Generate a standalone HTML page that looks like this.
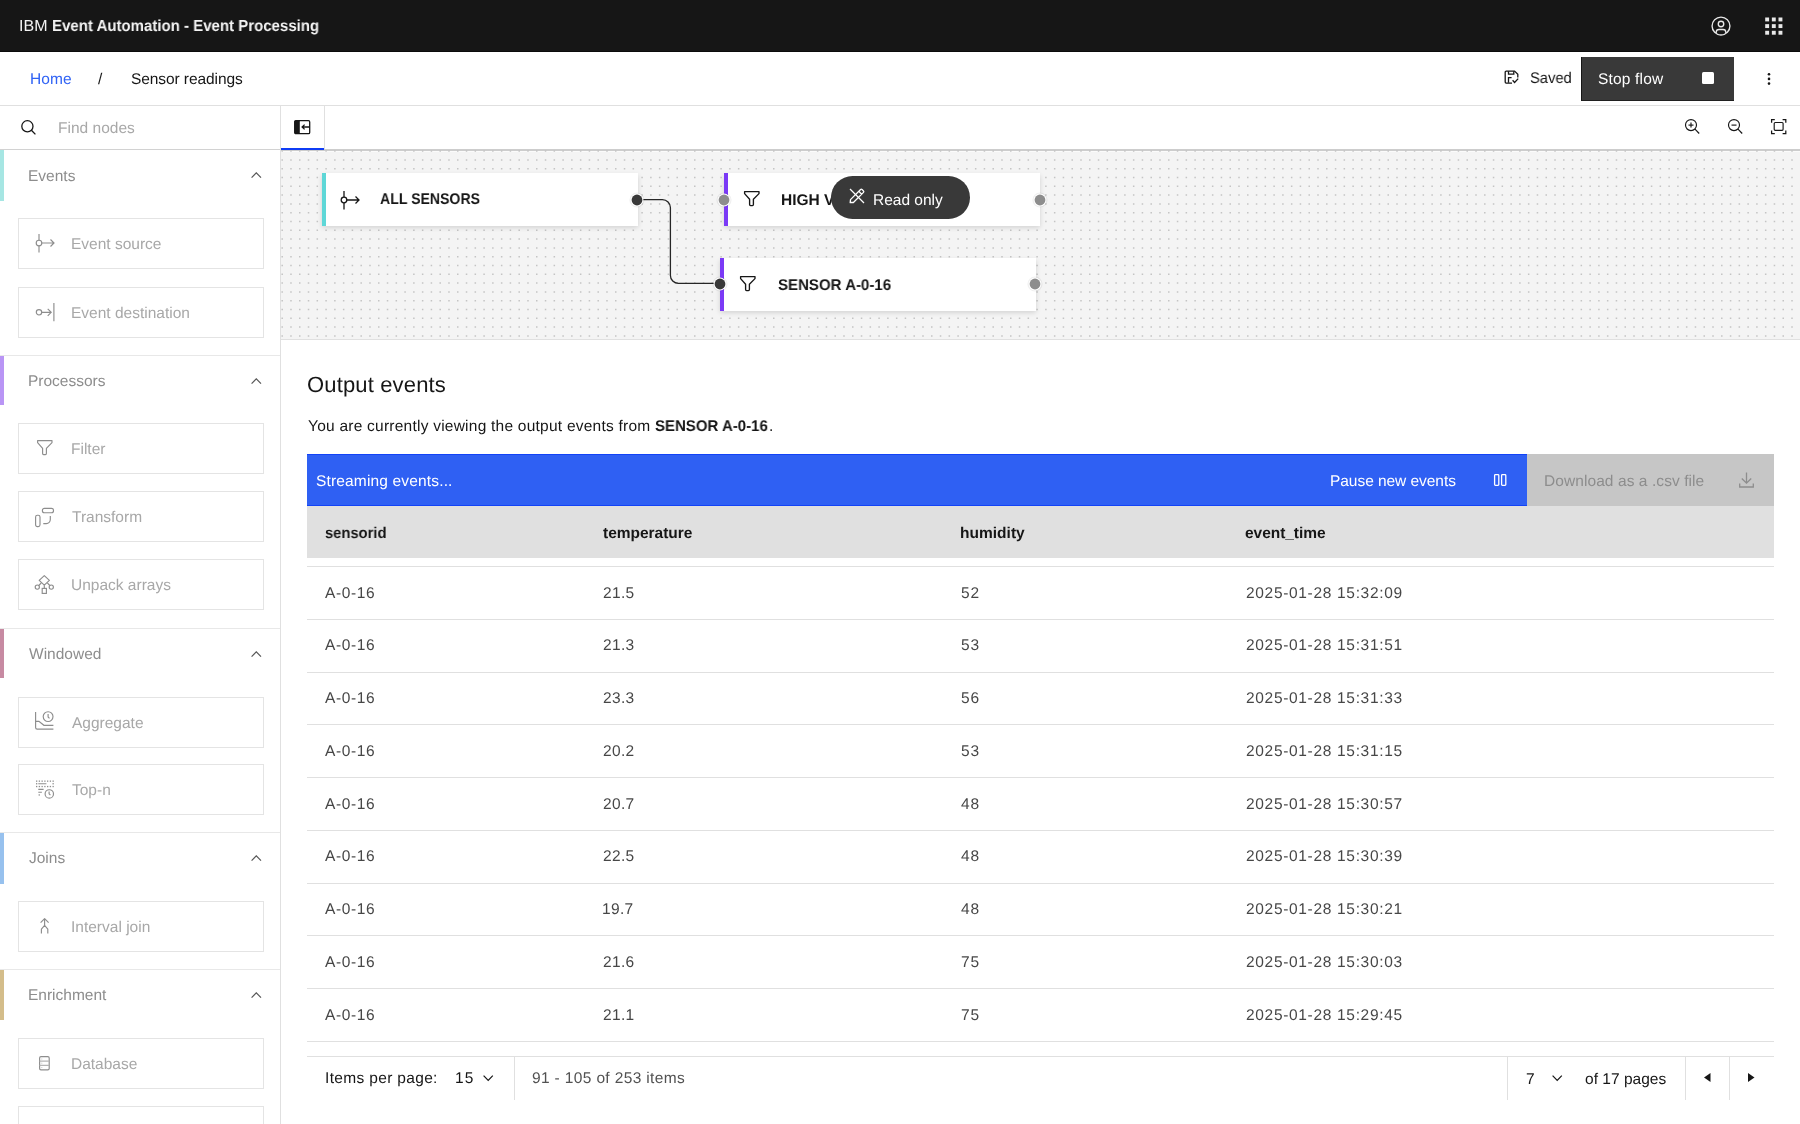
<!DOCTYPE html>
<html><head><meta charset="utf-8"><title>Event Processing</title>
<style>
html,body{margin:0;padding:0;}
body{width:1800px;height:1124px;overflow:hidden;position:relative;background:#fff;font-family:"Liberation Sans",sans-serif;}
.t{position:absolute;white-space:nowrap;text-rendering:geometricPrecision;will-change:transform;}
svg{display:block;}
</style></head><body>
<div style="position:absolute;left:0px;top:0px;width:1800px;height:52px;background:#161616;"></div>
<div style="position:absolute;left:0px;top:51px;width:1800px;height:1px;background:#0b0b0b;"></div>
<div class="t" id="t1" style="left:19.20px;top:17.35px;font-size:16px;line-height:20px;color:#f4f4f4;letter-spacing:0.091px;">IBM</div>
<div class="t" id="t2" style="left:52.06px;top:17.35px;font-size:16px;line-height:20px;color:#f4f4f4;transform:scaleX(0.9379);transform-origin:0 0;font-weight:700;">Event Automation - Event Processing</div>
<svg style="position:absolute;left:1710px;top:14.9px;" width="22" height="22" viewBox="0 0 32 32"><path fill="#e8e8e8" d="M16,8a5,5,0,1,0,5,5A5,5,0,0,0,16,8Zm0,8a3,3,0,1,1,3-3A3.0034,3.0034,0,0,1,16,16Z"/><path fill="#e8e8e8" d="M16,2A14,14,0,1,0,30,16,14.0158,14.0158,0,0,0,16,2ZM10,26.3765V25a3.0033,3.0033,0,0,1,3-3h6a3.0033,3.0033,0,0,1,3,3v1.3765a11.8989,11.8989,0,0,1-12,0ZM23.9925,24.9258A5.0016,5.0016,0,0,0,19,20H13a5.0016,5.0016,0,0,0-4.9925,4.9258,12,12,0,1,1,15.985,0Z"/></svg>
<svg style="position:absolute;left:1765px;top:17.2px;overflow:visible;" width="18" height="18" viewBox="0 0 18 18" fill="none"><rect x="0.20" y="0.50" width="3.9" height="3.9" fill="#e8e8e8"/><rect x="6.85" y="0.50" width="3.9" height="3.9" fill="#e8e8e8"/><rect x="13.50" y="0.50" width="3.9" height="3.9" fill="#e8e8e8"/><rect x="0.20" y="7.15" width="3.9" height="3.9" fill="#e8e8e8"/><rect x="6.85" y="7.15" width="3.9" height="3.9" fill="#e8e8e8"/><rect x="13.50" y="7.15" width="3.9" height="3.9" fill="#e8e8e8"/><rect x="0.20" y="13.80" width="3.9" height="3.9" fill="#e8e8e8"/><rect x="6.85" y="13.80" width="3.9" height="3.9" fill="#e8e8e8"/><rect x="13.50" y="13.80" width="3.9" height="3.9" fill="#e8e8e8"/></svg>
<div style="position:absolute;left:0px;top:52px;width:1800px;height:53px;background:#ffffff;"></div>
<div style="position:absolute;left:0px;top:105px;width:1800px;height:1px;background:#e0e0e0;"></div>
<div class="t" id="t3" style="left:30.30px;top:69.83px;font-size:15.5px;line-height:20px;color:#2f62f5;letter-spacing:0.091px;">Home</div>
<div class="t" id="t4" style="left:98.00px;top:69.83px;font-size:15.5px;line-height:20px;color:#161616;">/</div>
<div class="t" id="t5" style="left:131.30px;top:69.83px;font-size:15.5px;line-height:20px;color:#161616;letter-spacing:-0.080px;">Sensor readings</div>
<svg style="position:absolute;left:1504px;top:70px;overflow:visible;" width="16" height="16" viewBox="0 0 16 16" fill="none"><path d="M8 13.1 H2.2 a1 1 0 0 1 -1 -1 V2.1 a1 1 0 0 1 1 -1 H10.6 L13.8 4.3 V7.5" stroke="#161616" stroke-width="1.3" stroke-linejoin="round"/><path d="M4.5 1.2 V4.1 H9.8 V1.2" stroke="#161616" stroke-width="1.3"/><path d="M4.5 12.8 V7.6 H7.6" stroke="#161616" stroke-width="1.3"/><path d="M8.6 10.2 L10.6 12.5 L14.2 8.6" stroke="#161616" stroke-width="1.3"/></svg>
<div class="t" id="t6" style="left:1529.70px;top:69.03px;font-size:15.5px;line-height:20px;color:#161616;transform:scaleX(0.9509);transform-origin:0 0;">Saved</div>
<div style="position:absolute;left:1580.5px;top:57px;width:153.5px;height:43.8px;background:#393939;box-sizing:border-box;border-left:1px solid #161616;border-bottom:1px solid #202020;"></div>
<div class="t" id="t7" style="left:1598.00px;top:69.73px;font-size:15.5px;line-height:20px;color:#ffffff;letter-spacing:0.180px;">Stop flow</div>
<div style="position:absolute;left:1702px;top:72px;width:11.5px;height:11.5px;background:#ffffff;border-radius:1.5px;"></div>
<svg style="position:absolute;left:1767px;top:72px;overflow:visible;" width="4" height="14" viewBox="0 0 4 14" fill="none"><circle cx="2" cy="2.2" r="1.3" fill="#161616"/><circle cx="2" cy="6.9" r="1.3" fill="#161616"/><circle cx="2" cy="11.6" r="1.3" fill="#161616"/></svg>
<div style="position:absolute;left:0px;top:106px;width:1800px;height:44px;background:#ffffff;"></div>
<div style="position:absolute;left:0px;top:149px;width:1800px;height:1px;background:#d2d2d2;"></div>
<svg style="position:absolute;left:20px;top:119px;overflow:visible;" width="18" height="18" viewBox="0 0 18 18" fill="none"><circle cx="7.4" cy="7.3" r="5.6" stroke="#161616" stroke-width="1.3"/><path d="M11.4 11.3 L15.4 15.4" stroke="#161616" stroke-width="1.3"/></svg>
<div class="t" id="t8" style="left:57.90px;top:119.03px;font-size:15.5px;line-height:20px;color:#a8a8a8;letter-spacing:0.018px;">Find nodes</div>
<div style="position:absolute;left:280px;top:106px;width:1px;height:44px;background:#e0e0e0;"></div>
<div style="position:absolute;left:324px;top:106px;width:1px;height:44px;background:#e0e0e0;"></div>
<svg style="position:absolute;left:294.2px;top:119.8px;overflow:visible;" width="17" height="15" viewBox="0 0 17 15" fill="none"><rect x="0.7" y="0.7" width="15" height="13" rx="1.2" stroke="#161616" stroke-width="1.3" fill="#fff"/><rect x="0.6" y="0.6" width="5.2" height="13.2" rx="0.8" fill="#161616"/><path d="M15.5 7.0 H8.4 M10.6 4.6 L8.1 7.0 L10.6 9.4" stroke="#161616" stroke-width="1.3"/></svg>
<div style="position:absolute;left:281px;top:148px;width:43px;height:2px;background:#0f3cf5;"></div>
<svg style="position:absolute;left:1684.8px;top:119px;overflow:visible;" width="16" height="16" viewBox="0 0 16 16" fill="none"><circle cx="6" cy="6.1" r="5.5" stroke="#161616" stroke-width="1.15"/><path d="M10 10.1 L14.2 14.5" stroke="#161616" stroke-width="1.15"/><path d="M3.5 6.1 H8.5" stroke="#161616" stroke-width="1.15"/><path d="M6 3.6 V8.6" stroke="#161616" stroke-width="1.15"/></svg>
<svg style="position:absolute;left:1727.8px;top:119px;overflow:visible;" width="16" height="16" viewBox="0 0 16 16" fill="none"><circle cx="6" cy="6.1" r="5.5" stroke="#161616" stroke-width="1.15"/><path d="M10 10.1 L14.2 14.5" stroke="#161616" stroke-width="1.15"/><path d="M3.5 6.1 H8.5" stroke="#161616" stroke-width="1.15"/></svg>
<svg style="position:absolute;left:1770.6px;top:119.2px;overflow:visible;" width="16" height="16" viewBox="0 0 16 16" fill="none"><path d="M0.6 3.8 V0.6 H3.8 M11.6 0.6 H14.8 V3.8 M14.8 11.4 V14.6 H11.6 M3.8 14.6 H0.6 V11.4" stroke="#161616" stroke-width="1.25"/><rect x="3.2" y="3.5" width="8.9" height="7.8" rx="1" stroke="#161616" stroke-width="1.15"/></svg>
<div style="position:absolute;left:0px;top:150px;width:280px;height:974px;background:#ffffff;"></div>
<div style="position:absolute;left:280px;top:150px;width:1px;height:974px;background:#e0e0e0;"></div>
<div style="position:absolute;left:0px;top:150px;width:4px;height:51px;background:#a6e6e3;"></div>
<div class="t" id="t9" style="left:27.50px;top:167.03px;font-size:15.5px;line-height:20px;color:#8d8d8d;">Events</div>
<svg style="position:absolute;left:250.5px;top:172.2px;overflow:visible;" width="11" height="6" viewBox="0 0 11 6" fill="none"><path d="M0.6 5.6 L5.3 0.9 L10 5.6" stroke="#555" stroke-width="1.2"/></svg>
<div style="position:absolute;left:18px;top:218px;width:246px;height:51px;background:#ffffff;box-sizing:border-box;border:1px solid #e4e4e4;"></div>
<div class="t" id="t10" style="left:70.80px;top:234.93px;font-size:15.5px;line-height:20px;color:#a8a8a8;">Event source</div>
<svg style="position:absolute;left:28.6px;top:233.29999999999998px;overflow:visible;" width="20" height="20" viewBox="0 0 20 20" fill="none"><path d="M10 1 V7.2 M10 12.8 V19.5" stroke="#8d8d8d" stroke-width="1.15"/><circle cx="10" cy="10" r="2.8" stroke="#8d8d8d" stroke-width="1.15"/><path d="M12.8 10 H25 M21.5 6.5 L25 10 L21.5 13.5" stroke="#8d8d8d" stroke-width="1.15"/></svg>
<div style="position:absolute;left:18px;top:287px;width:246px;height:51px;background:#ffffff;box-sizing:border-box;border:1px solid #e4e4e4;"></div>
<div class="t" id="t11" style="left:70.80px;top:303.93px;font-size:15.5px;line-height:20px;color:#a8a8a8;">Event destination</div>
<svg style="position:absolute;left:35.5px;top:303.09999999999997px;overflow:visible;" width="20" height="20" viewBox="0 0 20 20" fill="none"><circle cx="3" cy="9.3" r="2.7" stroke="#8d8d8d" stroke-width="1.15"/><path d="M5.7 9.3 H15.2 M11.7 5.8 L15.2 9.3 L11.7 12.8 M17.9 0 V18.3" stroke="#8d8d8d" stroke-width="1.15"/></svg>
<div style="position:absolute;left:0px;top:355px;width:280px;height:1px;background:#e8e8e8;"></div>
<div style="position:absolute;left:0px;top:356px;width:4px;height:49px;background:#b995f5;"></div>
<div class="t" id="t12" style="left:27.50px;top:372.23px;font-size:15.5px;line-height:20px;color:#8d8d8d;">Processors</div>
<svg style="position:absolute;left:250.5px;top:378.2px;overflow:visible;" width="11" height="6" viewBox="0 0 11 6" fill="none"><path d="M0.6 5.6 L5.3 0.9 L10 5.6" stroke="#555" stroke-width="1.2"/></svg>
<div style="position:absolute;left:18px;top:423px;width:246px;height:51px;background:#ffffff;box-sizing:border-box;border:1px solid #e4e4e4;"></div>
<div class="t" id="t13" style="left:70.80px;top:439.93px;font-size:15.5px;line-height:20px;color:#a8a8a8;">Filter</div>
<svg style="position:absolute;left:37px;top:440.2px;overflow:visible;" width="16" height="16" viewBox="0 0 16 16" fill="none"><path d="M0.6 0.6 H15 V2.6 L9.4 8.3 V13.6 a1 1 0 0 1 -1 1 H6.6 a1 1 0 0 1 -1 -1 V8.3 L0.6 2.6 Z" stroke="#8d8d8d" stroke-width="1.15" stroke-linejoin="round"/></svg>
<div style="position:absolute;left:18px;top:491px;width:246px;height:51px;background:#ffffff;box-sizing:border-box;border:1px solid #e4e4e4;"></div>
<div class="t" id="t14" style="left:71.80px;top:507.93px;font-size:15.5px;line-height:20px;color:#a8a8a8;">Transform</div>
<svg style="position:absolute;left:34.9px;top:507.6px;overflow:visible;" width="20" height="20" viewBox="0 0 20 20" fill="none"><rect x="7.4" y="0.4" width="11.1" height="4.3" rx="2" stroke="#8d8d8d" stroke-width="1.15"/><rect x="0.6" y="7.2" width="4.4" height="11.4" rx="1.8" stroke="#8d8d8d" stroke-width="1.15"/><path d="M15.3 8.1 V11.6 a4 4 0 0 1 -4 4 H8.3" stroke="#8d8d8d" stroke-width="1.15"/></svg>
<div style="position:absolute;left:18px;top:559px;width:246px;height:51px;background:#ffffff;box-sizing:border-box;border:1px solid #e4e4e4;"></div>
<div class="t" id="t15" style="left:70.80px;top:575.93px;font-size:15.5px;line-height:20px;color:#a8a8a8;">Unpack arrays</div>
<svg style="position:absolute;left:35.2px;top:574.6px;overflow:visible;" width="20" height="20" viewBox="0 0 20 20" fill="none"><path d="M9.3 0.6 L14.4 5.4 L9.3 10.2 L4.2 5.4 Z" stroke="#8d8d8d" stroke-width="1.15" stroke-linejoin="round"/><circle cx="2.3" cy="12.1" r="2.1" stroke="#8d8d8d" stroke-width="1.15"/><circle cx="16.3" cy="12.1" r="2.1" stroke="#8d8d8d" stroke-width="1.15"/><path d="M3.8 10.5 L6.3 7.8 M14.8 10.5 L12.3 7.8 M9.3 10.2 V13.4" stroke="#8d8d8d" stroke-width="1.15"/><rect x="7.2" y="13.4" width="4.2" height="5" stroke="#8d8d8d" stroke-width="1.15"/></svg>
<div style="position:absolute;left:0px;top:628px;width:280px;height:1px;background:#e8e8e8;"></div>
<div style="position:absolute;left:0px;top:629px;width:4px;height:49px;background:#c78aa2;"></div>
<div class="t" id="t16" style="left:28.50px;top:645.23px;font-size:15.5px;line-height:20px;color:#8d8d8d;">Windowed</div>
<svg style="position:absolute;left:250.5px;top:651.2px;overflow:visible;" width="11" height="6" viewBox="0 0 11 6" fill="none"><path d="M0.6 5.6 L5.3 0.9 L10 5.6" stroke="#555" stroke-width="1.2"/></svg>
<div style="position:absolute;left:18px;top:697px;width:246px;height:51px;background:#ffffff;box-sizing:border-box;border:1px solid #e4e4e4;"></div>
<div class="t" id="t17" style="left:71.80px;top:713.93px;font-size:15.5px;line-height:20px;color:#a8a8a8;">Aggregate</div>
<svg style="position:absolute;left:35.4px;top:712.3000000000001px;overflow:visible;" width="20" height="20" viewBox="0 0 20 20" fill="none"><path d="M0.6 0 V15.5 a1.6 1.6 0 0 0 1.6 1.6 H18.4" stroke="#8d8d8d" stroke-width="1.15"/><path d="M0.6 9.3 H3.9 L8.9 13.3 H18.4" stroke="#8d8d8d" stroke-width="1.15"/><circle cx="13.1" cy="4.6" r="4.9" stroke="#8d8d8d" stroke-width="1.15"/><path d="M13.1 2.1 V4.9 L14.5 6.3" stroke="#8d8d8d" stroke-width="1.15"/></svg>
<div style="position:absolute;left:18px;top:764px;width:246px;height:51px;background:#ffffff;box-sizing:border-box;border:1px solid #e4e4e4;"></div>
<div class="t" id="t18" style="left:71.80px;top:780.93px;font-size:15.5px;line-height:20px;color:#a8a8a8;">Top-n</div>
<svg style="position:absolute;left:36px;top:780.4000000000001px;overflow:visible;" width="20" height="20" viewBox="0 0 20 20" fill="none"><rect x="0.00" y="0.5" width="1.3" height="1.3" fill="#8d8d8d"/><rect x="2.75" y="0.5" width="1.3" height="1.3" fill="#8d8d8d"/><rect x="5.50" y="0.5" width="1.3" height="1.3" fill="#8d8d8d"/><rect x="8.25" y="0.5" width="1.3" height="1.3" fill="#8d8d8d"/><rect x="11.00" y="0.5" width="1.3" height="1.3" fill="#8d8d8d"/><rect x="13.75" y="0.5" width="1.3" height="1.3" fill="#8d8d8d"/><rect x="16.50" y="0.5" width="1.3" height="1.3" fill="#8d8d8d"/><rect x="0.00" y="5.9" width="1.3" height="1.3" fill="#8d8d8d"/><rect x="2.75" y="5.9" width="1.3" height="1.3" fill="#8d8d8d"/><rect x="5.50" y="5.9" width="1.3" height="1.3" fill="#8d8d8d"/><rect x="8.25" y="5.9" width="1.3" height="1.3" fill="#8d8d8d"/><rect x="11.00" y="5.9" width="1.3" height="1.3" fill="#8d8d8d"/><rect x="13.75" y="5.9" width="1.3" height="1.3" fill="#8d8d8d"/><rect x="16.50" y="5.9" width="1.3" height="1.3" fill="#8d8d8d"/><rect x="0" y="3.1" width="1.3" height="1.3" fill="#8d8d8d"/><rect x="16.5" y="3.1" width="1.3" height="1.3" fill="#8d8d8d"/><path d="M2.3 3.75 H10.4 M2.3 9.4 H7.6 M2.3 12.3 H5.9" stroke="#8d8d8d" stroke-width="1.1"/><rect x="2.6" y="14.3" width="1.3" height="1.3" fill="#8d8d8d"/><circle cx="13.3" cy="13.9" r="4.2" stroke="#8d8d8d" stroke-width="1.15"/><path d="M13.1 11.5 V13.8 L14.4 15.2" stroke="#8d8d8d" stroke-width="1.15"/></svg>
<div style="position:absolute;left:0px;top:832px;width:280px;height:1px;background:#e8e8e8;"></div>
<div style="position:absolute;left:0px;top:833px;width:4px;height:51px;background:#97c1ee;"></div>
<div class="t" id="t19" style="left:28.50px;top:849.23px;font-size:15.5px;line-height:20px;color:#8d8d8d;">Joins</div>
<svg style="position:absolute;left:250.5px;top:855.2px;overflow:visible;" width="11" height="6" viewBox="0 0 11 6" fill="none"><path d="M0.6 5.6 L5.3 0.9 L10 5.6" stroke="#555" stroke-width="1.2"/></svg>
<div style="position:absolute;left:18px;top:901px;width:246px;height:51px;background:#ffffff;box-sizing:border-box;border:1px solid #e4e4e4;"></div>
<div class="t" id="t20" style="left:70.80px;top:917.93px;font-size:15.5px;line-height:20px;color:#a8a8a8;">Interval join</div>
<svg style="position:absolute;left:39.9px;top:918.1px;overflow:visible;" width="12" height="18" viewBox="0 0 12 18" fill="none"><path d="M0.6 4.6 L4.6 0.6 L8.6 4.6 M4.6 0.6 V7.4 L1.4 11.2 V15.5 M4.6 7.4 L7.8 11.2 V15.5" stroke="#8d8d8d" stroke-width="1.15" stroke-linejoin="round"/></svg>
<div style="position:absolute;left:0px;top:969px;width:280px;height:1px;background:#e8e8e8;"></div>
<div style="position:absolute;left:0px;top:970px;width:4px;height:50px;background:#d4bd8a;"></div>
<div class="t" id="t21" style="left:27.50px;top:986.23px;font-size:15.5px;line-height:20px;color:#8d8d8d;">Enrichment</div>
<svg style="position:absolute;left:250.5px;top:992.2px;overflow:visible;" width="11" height="6" viewBox="0 0 11 6" fill="none"><path d="M0.6 5.6 L5.3 0.9 L10 5.6" stroke="#555" stroke-width="1.2"/></svg>
<div style="position:absolute;left:18px;top:1038px;width:246px;height:51px;background:#ffffff;box-sizing:border-box;border:1px solid #e4e4e4;"></div>
<div class="t" id="t22" style="left:70.80px;top:1054.93px;font-size:15.5px;line-height:20px;color:#a8a8a8;">Database</div>
<svg style="position:absolute;left:39px;top:1056.4px;overflow:visible;" width="12" height="15" viewBox="0 0 12 15" fill="none"><rect x="0.6" y="0.6" width="9.6" height="13.2" rx="1.4" stroke="#8d8d8d" stroke-width="1.15"/><path d="M0.6 5.1 H10.2 M0.6 9.3 H10.2" stroke="#b5b5b5" stroke-width="1.15"/><path d="M2 3 H3.4 M2 7.2 H3.4 M2 11.5 H3.4" stroke="#d0d0d0" stroke-width="0.8"/></svg>
<div style="position:absolute;left:18px;top:1106px;width:246px;height:51px;background:#ffffff;box-sizing:border-box;border:1px solid #e4e4e4;"></div>
<div style="position:absolute;left:281px;top:149px;width:1519px;height:2px;background:#cdcdcd;"></div>
<div style="position:absolute;left:281px;top:151px;width:1519px;height:1px;background:#fbfbfb;"></div>
<div style="position:absolute;left:281px;top:148px;width:43px;height:2px;background:#0f3cf5;"></div>
<div style="position:absolute;left:281px;top:152px;width:1519px;height:187px;background:#f4f4f4;"></div>
<svg style="position:absolute;left:281px;top:150px;" width="1519" height="189"><path d="M0.45 1.100H1519M0.45 9.900H1519M0.45 18.700H1519M0.45 27.500H1519M0.45 36.300H1519M0.45 45.100H1519M0.45 53.900H1519M0.45 62.700H1519M0.45 71.500H1519M0.45 80.300H1519M0.45 89.100H1519M0.45 97.900H1519M0.45 106.700H1519M0.45 115.500H1519M0.45 124.300H1519M0.45 133.100H1519M0.45 141.900H1519M0.45 150.700H1519M0.45 159.500H1519M0.45 168.300H1519M0.45 177.100H1519M0.45 185.900H1519" stroke="#c4c4c4" stroke-width="1.5" stroke-dasharray="1.5 7.278"/></svg>
<div style="position:absolute;left:281px;top:339px;width:1519px;height:1px;background:#e0e0e0;"></div>
<svg style="position:absolute;left:637px;top:199px;overflow:visible;" width="90" height="90" viewBox="0 0 90 90" fill="none"><path d="M0 0.6 H25.4 a8 8 0 0 1 8 8 V76.4 a8 8 0 0 0 8 8 H83" stroke="#262626" stroke-width="1.3"/></svg>
<div style="position:absolute;left:322px;top:173px;width:316px;height:53px;background:#ffffff;box-shadow:0 1.5px 5px rgba(0,0,0,0.15);"></div><div style="position:absolute;left:322px;top:173px;width:4px;height:53px;background:#5ed7d7;"></div>
<div style="position:absolute;left:724px;top:173px;width:316px;height:53px;background:#ffffff;box-shadow:0 1.5px 5px rgba(0,0,0,0.15);"></div><div style="position:absolute;left:724px;top:173px;width:4px;height:53px;background:#7b3af6;"></div>
<div style="position:absolute;left:720px;top:257.5px;width:316px;height:53px;background:#ffffff;box-shadow:0 1.5px 5px rgba(0,0,0,0.15);"></div><div style="position:absolute;left:720px;top:257.5px;width:4px;height:53px;background:#7b3af6;"></div>
<svg style="position:absolute;left:627.30px;top:189.60px;" width="20" height="20"><circle cx="10" cy="10" r="7.6" fill="rgba(0,0,0,0.06)"/><circle cx="10" cy="10" r="6.4" fill="#fff"/><circle cx="10" cy="10" r="5.4" fill="#393939"/></svg>
<svg style="position:absolute;left:713.80px;top:189.60px;" width="20" height="20"><circle cx="10" cy="10" r="7.6" fill="rgba(0,0,0,0.06)"/><circle cx="10" cy="10" r="6.4" fill="#fff"/><circle cx="10" cy="10" r="5.4" fill="#8d8d8d"/></svg>
<svg style="position:absolute;left:1030.00px;top:189.60px;" width="20" height="20"><circle cx="10" cy="10" r="7.6" fill="rgba(0,0,0,0.06)"/><circle cx="10" cy="10" r="6.4" fill="#fff"/><circle cx="10" cy="10" r="5.4" fill="#8d8d8d"/></svg>
<svg style="position:absolute;left:709.60px;top:274.00px;" width="20" height="20"><circle cx="10" cy="10" r="7.6" fill="rgba(0,0,0,0.06)"/><circle cx="10" cy="10" r="6.4" fill="#fff"/><circle cx="10" cy="10" r="5.4" fill="#393939"/></svg>
<svg style="position:absolute;left:1025.40px;top:274.00px;" width="20" height="20"><circle cx="10" cy="10" r="7.6" fill="rgba(0,0,0,0.06)"/><circle cx="10" cy="10" r="6.4" fill="#fff"/><circle cx="10" cy="10" r="5.4" fill="#8d8d8d"/></svg>
<svg style="position:absolute;left:334.4px;top:189.6px;overflow:visible;" width="20" height="20" viewBox="0 0 20 20" fill="none"><path d="M10 1 V7.2 M10 12.8 V19.5" stroke="#161616" stroke-width="1.3"/><circle cx="10" cy="10" r="2.8" stroke="#161616" stroke-width="1.3"/><path d="M12.8 10 H25 M21.5 6.5 L25 10 L21.5 13.5" stroke="#161616" stroke-width="1.3"/></svg>
<div class="t" id="t23" style="left:379.50px;top:190.33px;font-size:15.5px;line-height:20px;color:#161616;transform:scaleX(0.9100);transform-origin:0 0;font-weight:700;">ALL SENSORS</div>
<svg style="position:absolute;left:744px;top:191px;overflow:visible;" width="16" height="16" viewBox="0 0 16 16" fill="none"><path d="M0.6 0.6 H15 V2.6 L9.4 8.3 V13.6 a1 1 0 0 1 -1 1 H6.6 a1 1 0 0 1 -1 -1 V8.3 L0.6 2.6 Z" stroke="#161616" stroke-width="1.35" stroke-linejoin="round"/></svg>
<div class="t" id="t24" style="left:781.00px;top:190.63px;font-size:15.5px;line-height:20px;color:#161616;font-weight:700;">HIGH VALUES</div>
<svg style="position:absolute;left:740px;top:276px;overflow:visible;" width="16" height="16" viewBox="0 0 16 16" fill="none"><path d="M0.6 0.6 H15 V2.6 L9.4 8.3 V13.6 a1 1 0 0 1 -1 1 H6.6 a1 1 0 0 1 -1 -1 V8.3 L0.6 2.6 Z" stroke="#161616" stroke-width="1.35" stroke-linejoin="round"/></svg>
<div class="t" id="t25" style="left:777.60px;top:275.63px;font-size:15.5px;line-height:20px;color:#161616;transform:scaleX(0.9700);transform-origin:0 0;font-weight:700;">SENSOR A-0-16</div>
<div style="position:absolute;left:831px;top:176px;width:139px;height:43px;background:#393939;border-radius:22px;"></div>
<svg style="position:absolute;left:848.5px;top:187.5px;overflow:visible;" width="16" height="16" viewBox="0 0 16 16" fill="none"><path d="M1 1 L15 15" stroke="#fff" stroke-width="1.3"/><path d="M2.2 14.4 L1.2 14.6 L1.5 11.6 L11.6 1.5 a1 1 0 0 1 1.4 0 L14.5 3 a1 1 0 0 1 0 1.4 L4.4 14.5 Z M9.8 3.3 L12.7 6.2" stroke="#fff" stroke-width="1.3" stroke-linejoin="round"/></svg>
<div class="t" id="t26" style="left:873.00px;top:191.13px;font-size:15.5px;line-height:20px;color:#ffffff;letter-spacing:-0.006px;">Read only</div>
<div style="position:absolute;left:281px;top:340px;width:1519px;height:784px;background:#ffffff;"></div>
<div class="t" id="t27" style="left:307.00px;top:370.97px;font-size:22px;line-height:28px;color:#161616;letter-spacing:0.152px;">Output events</div>
<div class="t" id="t28" style="left:307.50px;top:417.33px;font-size:15.5px;line-height:20px;color:#161616;letter-spacing:0.236px;">You are currently viewing the output events from</div>
<div class="t" id="t29" style="left:654.50px;top:417.33px;font-size:15.5px;line-height:20px;color:#161616;transform:scaleX(0.9675);transform-origin:0 0;font-weight:700;">SENSOR A-0-16</div>
<div class="t" id="t30" style="left:768.90px;top:417.33px;font-size:15.5px;line-height:20px;color:#161616;">.</div>
<div style="position:absolute;left:307px;top:454px;width:1220px;height:52px;background:#2f60f3;box-sizing:border-box;border-top:1px solid #1243f7;border-bottom:1px solid #1243f7;"></div>
<div class="t" id="t31" style="left:316.20px;top:471.53px;font-size:15.5px;line-height:20px;color:#ffffff;letter-spacing:0.159px;">Streaming events...</div>
<div class="t" id="t32" style="left:1329.80px;top:471.53px;font-size:15.5px;line-height:20px;color:#ffffff;letter-spacing:-0.048px;">Pause new events</div>
<svg style="position:absolute;left:1493.5px;top:473.5px;overflow:visible;" width="13" height="12" viewBox="0 0 13 12" fill="none"><rect x="0.6" y="0.6" width="4.2" height="10.8" rx="0.8" stroke="#fff" stroke-width="1.3"/><rect x="7.6" y="0.6" width="4.2" height="10.8" rx="0.8" stroke="#fff" stroke-width="1.3"/></svg>
<div style="position:absolute;left:1527px;top:454px;width:247px;height:52px;background:#c6c6c6;"></div>
<div class="t" id="t33" style="left:1543.70px;top:471.53px;font-size:15.5px;line-height:20px;color:#8d8d8d;letter-spacing:0.077px;">Download as a .csv file</div>
<svg style="position:absolute;left:1739px;top:472px;overflow:visible;" width="15" height="16" viewBox="0 0 15 16" fill="none"><path d="M7.5 0.5 V11 M2.8 6.5 L7.5 11.2 L12.2 6.5 M0.7 11.5 V15 H14.3 V11.5" stroke="#8d8d8d" stroke-width="1.3"/></svg>
<div style="position:absolute;left:307px;top:506px;width:1467px;height:52px;background:#e0e0e0;"></div>
<div class="t" id="t34" style="left:325.40px;top:523.83px;font-size:15.5px;line-height:20px;color:#161616;transform:scaleX(0.9511);transform-origin:0 0;font-weight:700;">sensorid</div>
<div class="t" id="t35" style="left:602.70px;top:523.83px;font-size:15.5px;line-height:20px;color:#161616;font-weight:700;letter-spacing:-0.017px;">temperature</div>
<div class="t" id="t36" style="left:960.30px;top:523.83px;font-size:15.5px;line-height:20px;color:#161616;font-weight:700;letter-spacing:0.020px;">humidity</div>
<div class="t" id="t37" style="left:1244.60px;top:523.83px;font-size:15.5px;line-height:20px;color:#161616;font-weight:700;letter-spacing:-0.040px;">event_time</div>
<div style="position:absolute;left:307px;top:566px;width:1467px;height:1px;background:#e0e0e0;"></div>
<div class="t" id="t38" style="left:325.40px;top:583.63px;font-size:15.5px;line-height:20px;color:#474747;letter-spacing:0.620px;">A-0-16</div>
<div class="t" id="t39" style="left:602.70px;top:583.63px;font-size:15.5px;line-height:20px;color:#474747;letter-spacing:0.351px;">21.5</div>
<div class="t" id="t40" style="left:961.30px;top:583.63px;font-size:15.5px;line-height:20px;color:#474747;letter-spacing:0.980px;">52</div>
<div class="t" id="t41" style="left:1245.50px;top:583.63px;font-size:15.5px;line-height:20px;color:#474747;letter-spacing:0.677px;">2025-01-28 15:32:09</div>
<div style="position:absolute;left:307px;top:619px;width:1467px;height:1px;background:#e0e0e0;"></div>
<div class="t" id="t42" style="left:325.40px;top:636.38px;font-size:15.5px;line-height:20px;color:#474747;letter-spacing:0.620px;">A-0-16</div>
<div class="t" id="t43" style="left:602.70px;top:636.38px;font-size:15.5px;line-height:20px;color:#474747;letter-spacing:0.351px;">21.3</div>
<div class="t" id="t44" style="left:961.30px;top:636.38px;font-size:15.5px;line-height:20px;color:#474747;letter-spacing:0.980px;">53</div>
<div class="t" id="t45" style="left:1245.50px;top:636.38px;font-size:15.5px;line-height:20px;color:#474747;letter-spacing:0.677px;">2025-01-28 15:31:51</div>
<div style="position:absolute;left:307px;top:672px;width:1467px;height:1px;background:#e0e0e0;"></div>
<div class="t" id="t46" style="left:325.40px;top:689.13px;font-size:15.5px;line-height:20px;color:#474747;letter-spacing:0.620px;">A-0-16</div>
<div class="t" id="t47" style="left:602.70px;top:689.13px;font-size:15.5px;line-height:20px;color:#474747;letter-spacing:0.351px;">23.3</div>
<div class="t" id="t48" style="left:961.30px;top:689.13px;font-size:15.5px;line-height:20px;color:#474747;letter-spacing:0.980px;">56</div>
<div class="t" id="t49" style="left:1245.50px;top:689.13px;font-size:15.5px;line-height:20px;color:#474747;letter-spacing:0.677px;">2025-01-28 15:31:33</div>
<div style="position:absolute;left:307px;top:724px;width:1467px;height:1px;background:#e0e0e0;"></div>
<div class="t" id="t50" style="left:325.40px;top:741.88px;font-size:15.5px;line-height:20px;color:#474747;letter-spacing:0.620px;">A-0-16</div>
<div class="t" id="t51" style="left:602.70px;top:741.88px;font-size:15.5px;line-height:20px;color:#474747;letter-spacing:0.351px;">20.2</div>
<div class="t" id="t52" style="left:961.30px;top:741.88px;font-size:15.5px;line-height:20px;color:#474747;letter-spacing:0.980px;">53</div>
<div class="t" id="t53" style="left:1245.50px;top:741.88px;font-size:15.5px;line-height:20px;color:#474747;letter-spacing:0.677px;">2025-01-28 15:31:15</div>
<div style="position:absolute;left:307px;top:777px;width:1467px;height:1px;background:#e0e0e0;"></div>
<div class="t" id="t54" style="left:325.40px;top:794.63px;font-size:15.5px;line-height:20px;color:#474747;letter-spacing:0.620px;">A-0-16</div>
<div class="t" id="t55" style="left:602.70px;top:794.63px;font-size:15.5px;line-height:20px;color:#474747;letter-spacing:0.351px;">20.7</div>
<div class="t" id="t56" style="left:961.30px;top:794.63px;font-size:15.5px;line-height:20px;color:#474747;letter-spacing:0.980px;">48</div>
<div class="t" id="t57" style="left:1245.50px;top:794.63px;font-size:15.5px;line-height:20px;color:#474747;letter-spacing:0.677px;">2025-01-28 15:30:57</div>
<div style="position:absolute;left:307px;top:830px;width:1467px;height:1px;background:#e0e0e0;"></div>
<div class="t" id="t58" style="left:325.40px;top:847.38px;font-size:15.5px;line-height:20px;color:#474747;letter-spacing:0.620px;">A-0-16</div>
<div class="t" id="t59" style="left:602.70px;top:847.38px;font-size:15.5px;line-height:20px;color:#474747;letter-spacing:0.351px;">22.5</div>
<div class="t" id="t60" style="left:961.30px;top:847.38px;font-size:15.5px;line-height:20px;color:#474747;letter-spacing:0.980px;">48</div>
<div class="t" id="t61" style="left:1245.50px;top:847.38px;font-size:15.5px;line-height:20px;color:#474747;letter-spacing:0.677px;">2025-01-28 15:30:39</div>
<div style="position:absolute;left:307px;top:883px;width:1467px;height:1px;background:#e0e0e0;"></div>
<div class="t" id="t62" style="left:325.40px;top:900.13px;font-size:15.5px;line-height:20px;color:#474747;letter-spacing:0.620px;">A-0-16</div>
<div class="t" id="t63" style="left:601.70px;top:900.13px;font-size:15.5px;line-height:20px;color:#474747;letter-spacing:0.351px;">19.7</div>
<div class="t" id="t64" style="left:961.30px;top:900.13px;font-size:15.5px;line-height:20px;color:#474747;letter-spacing:0.980px;">48</div>
<div class="t" id="t65" style="left:1245.50px;top:900.13px;font-size:15.5px;line-height:20px;color:#474747;letter-spacing:0.677px;">2025-01-28 15:30:21</div>
<div style="position:absolute;left:307px;top:935px;width:1467px;height:1px;background:#e0e0e0;"></div>
<div class="t" id="t66" style="left:325.40px;top:952.88px;font-size:15.5px;line-height:20px;color:#474747;letter-spacing:0.620px;">A-0-16</div>
<div class="t" id="t67" style="left:602.70px;top:952.88px;font-size:15.5px;line-height:20px;color:#474747;letter-spacing:0.351px;">21.6</div>
<div class="t" id="t68" style="left:961.30px;top:952.88px;font-size:15.5px;line-height:20px;color:#474747;letter-spacing:0.980px;">75</div>
<div class="t" id="t69" style="left:1245.50px;top:952.88px;font-size:15.5px;line-height:20px;color:#474747;letter-spacing:0.677px;">2025-01-28 15:30:03</div>
<div style="position:absolute;left:307px;top:988px;width:1467px;height:1px;background:#e0e0e0;"></div>
<div class="t" id="t70" style="left:325.40px;top:1005.63px;font-size:15.5px;line-height:20px;color:#474747;letter-spacing:0.620px;">A-0-16</div>
<div class="t" id="t71" style="left:602.70px;top:1005.63px;font-size:15.5px;line-height:20px;color:#474747;letter-spacing:0.351px;">21.1</div>
<div class="t" id="t72" style="left:961.30px;top:1005.63px;font-size:15.5px;line-height:20px;color:#474747;letter-spacing:0.980px;">75</div>
<div class="t" id="t73" style="left:1245.50px;top:1005.63px;font-size:15.5px;line-height:20px;color:#474747;letter-spacing:0.677px;">2025-01-28 15:29:45</div>
<div style="position:absolute;left:307px;top:1041px;width:1467px;height:1px;background:#e0e0e0;"></div>
<div style="position:absolute;left:307px;top:1056px;width:1467px;height:1px;background:#e0e0e0;"></div>
<div class="t" id="t74" style="left:324.50px;top:1069.33px;font-size:15.5px;line-height:20px;color:#161616;letter-spacing:0.336px;">Items per page:</div>
<div class="t" id="t75" style="left:455.10px;top:1069.33px;font-size:15.5px;line-height:20px;color:#161616;letter-spacing:1.080px;">15</div>
<svg style="position:absolute;left:483px;top:1074.6px;overflow:visible;" width="11" height="7" viewBox="0 0 11 7" fill="none"><path d="M0.6 0.6 L5.2 5.4 L9.8 0.6" stroke="#161616" stroke-width="1.2"/></svg>
<div style="position:absolute;left:514px;top:1057px;width:1px;height:43px;background:#e0e0e0;"></div>
<div class="t" id="t76" style="left:532.20px;top:1069.33px;font-size:15.5px;line-height:20px;color:#525252;letter-spacing:0.357px;">91 - 105 of 253 items</div>
<div style="position:absolute;left:1507px;top:1057px;width:1px;height:43px;background:#e0e0e0;"></div>
<div class="t" id="t77" style="left:1525.60px;top:1069.63px;font-size:15.5px;line-height:20px;color:#161616;">7</div>
<svg style="position:absolute;left:1552px;top:1074.6px;overflow:visible;" width="11" height="7" viewBox="0 0 11 7" fill="none"><path d="M0.6 0.6 L5.2 5.4 L9.8 0.6" stroke="#161616" stroke-width="1.2"/></svg>
<div class="t" id="t78" style="left:1585.30px;top:1069.63px;font-size:15.5px;line-height:20px;color:#161616;letter-spacing:0.024px;">of 17 pages</div>
<div style="position:absolute;left:1685px;top:1057px;width:1px;height:43px;background:#e0e0e0;"></div>
<div style="position:absolute;left:1729px;top:1057px;width:1px;height:43px;background:#e0e0e0;"></div>
<svg style="position:absolute;left:1703.8px;top:1073px;overflow:visible;" width="7" height="10" viewBox="0 0 7 10" fill="none"><path d="M6.5 0 V9 L0 4.5 Z" fill="#161616"/></svg>
<svg style="position:absolute;left:1748.2px;top:1073px;overflow:visible;" width="7" height="10" viewBox="0 0 7 10" fill="none"><path d="M0 0 V9 L6.5 4.5 Z" fill="#161616"/></svg>
</body></html>
